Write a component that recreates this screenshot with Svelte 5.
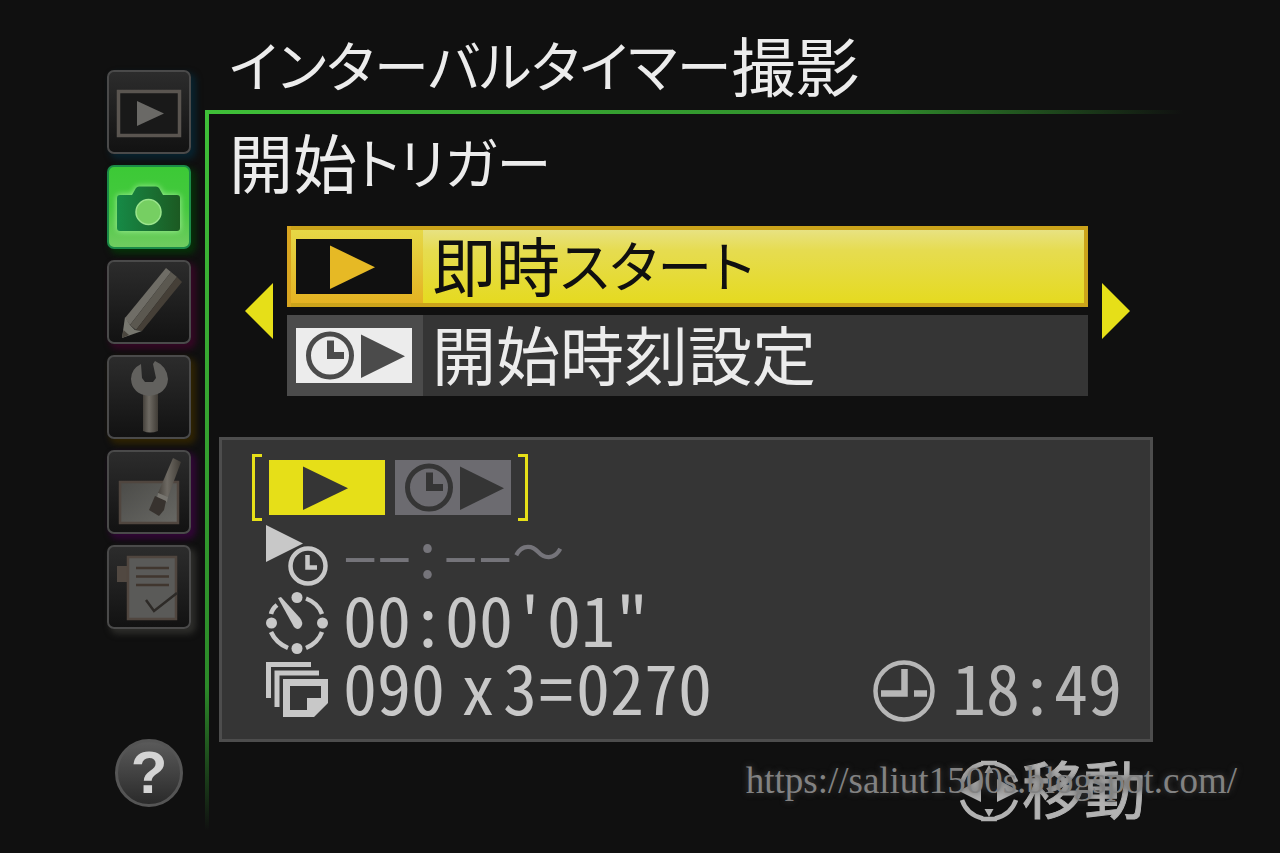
<script>
  const tabs = [
    { id: 'playback', label: '再生メニュー' },
    { id: 'shooting', label: '撮影メニュー' },
    { id: 'custom', label: 'カスタムメニュー' },
    { id: 'setup', label: 'セットアップメニュー' },
    { id: 'retouch', label: '画像編集メニュー' },
    { id: 'mymenu', label: 'マイメニュー' }
  ];

  const options = [
    { id: 'now', label: '即時スタート' },
    { id: 'time', label: '開始時刻設定' }
  ];

  let activeTab = $state('shooting');
  let trigger = $state('now');

  function toggle() {
    trigger = trigger === 'now' ? 'time' : 'now';
  }

  // split a label into kana and kanji runs, kana is set a size smaller
  function runs(text) {
    return text.match(/[\u30a0-\u30ff]+|[^\u30a0-\u30ff]+/g);
  }

  function isKana(run) {
    return /^[\u30a0-\u30ff]/.test(run);
  }
</script>

{#snippet label(text)}
  {#each runs(text) as run}<span class:kana={isKana(run)}>{run}</span>{/each}
{/snippet}

{#snippet triggerIcon(id)}
  <svg class="trigger-icon" viewBox="0 0 116 55" aria-hidden="true">
    <rect class="plate" width="116" height="55" />
    {#if id === 'now'}
      <path class="ink" d="M34 6.5v43.5l45-21.7z" />
    {:else}
      <circle class="ink-line" cx="34" cy="27.5" r="21.5" />
      <path class="ink" d="M31 12.5h7v11.5h10v7H31zM65 6.5v43.5l44-21.7z" />
    {/if}
  </svg>
{/snippet}

{#snippet tabIcon(id)}
  <svg viewBox="0 0 84 84" aria-hidden="true">
    {#if id === 'playback'}
      <rect x="11.5" y="21.5" width="61" height="44" fill="#191919" stroke="#5a5550" stroke-width="3.5" />
      <path d="M30 31v25l27-12.5z" fill="#6a6966" />
    {:else if id === 'shooting'}
      <g class="glow">
        <path d="M13 30h12l4-7q1-1.5 3-1.5h17q2 0 3 1.500l4 7h14q3 0 3 3v30q0 3-3 3H13q-3 0-3-3V33q0-3 3-3z" fill="url(#camera)" />
        <circle cx="41.5" cy="47" r="12.5" fill="#76cf62" stroke="#9be58c" stroke-width="1.5" />
      </g>
    {:else if id === 'custom'}
      <path d="M18 58L59 8l5 4-41 53z" fill="#6f6d66" />
      <path d="M23 65L64 12l6 5-41 53z" fill="#5b5850" />
      <path d="M29 70L70 17l5 5-40 49z" fill="#453f37" />
      <path d="M18 57l-3 21 20-7-7-1-5-5z" fill="#77776f" />
      <path d="M16.5 70L15 78l7-3z" fill="#4a463e" />
    {:else if id === 'setup'}
      <path d="M36 37v39q7 3 15 0V37z" fill="url(#steel)" />
      <path d="M34 9Q24 14 24 24q1 15 18 17 18-2 19-17-1-13-13-18l-2 3 3 14-3 4h-8l-3-4z" fill="#62615e" />
    {:else if id === 'retouch'}
      <rect x="13" y="32" width="58" height="41" fill="url(#paper)" stroke="#50463f" stroke-width="2.5" />
      <path d="M66 8l8 4-13 35-10-4z" fill="url(#steel)" />
      <path d="M51 43l10 4-1 5-10-4z" fill="#77756f" />
      <path d="M48 46l11 5-2 9-5 6-10-6z" fill="#37322e" />
    {:else}
      <rect x="10" y="21" width="11" height="16" fill="#514841" />
      <rect x="21" y="12" width="48" height="62" fill="#5a5a58" stroke="#50463f" stroke-width="2.5" />
      <path d="M29 23h33M29 31.5h33M29 40h33" stroke="#40362e" stroke-width="2.5" />
      <path d="M39 55l8 11 23-18" fill="none" stroke="#2d2a27" stroke-width="2.5" />
    {/if}
  </svg>
{/snippet}

<svg class="defs" width="0" height="0" aria-hidden="true">
  <defs>
    <linearGradient id="camera">
      <stop offset="0" stop-color="#168a46" />
      <stop offset="1" stop-color="#1c5a22" />
    </linearGradient>
    <linearGradient id="steel">
      <stop offset="0" stop-color="#45413b" />
      <stop offset="0.4" stop-color="#6e6a63" />
      <stop offset="1" stop-color="#403c36" />
    </linearGradient>
    <linearGradient id="paper" x2="1" y2="1">
      <stop offset="0" stop-color="#4b4b48" />
      <stop offset="1" stop-color="#686864" />
    </linearGradient>
  </defs>
</svg>

<div class="screen">
  <nav class="sidebar">
    {#each tabs as tab (tab.id)}
      <button
        class="tab {tab.id}"
        class:active={activeTab === tab.id}
        aria-label={tab.label}
        onclick={() => (activeTab = tab.id)}
      >
        {@render tabIcon(tab.id)}
      </button>
    {/each}
    <button class="help" aria-label="ヘルプ">?</button>
  </nav>

  <main>
    <h1>{@render label('インターバルタイマー撮影')}</h1>

    <div class="frame">
      <h2>{@render label('開始トリガー')}</h2>

      <div class="chooser">
        <button class="arrow" aria-label="前へ" onclick={toggle}>
          <svg viewBox="0 0 28 56" aria-hidden="true"><path d="M28 0v56L0 28z" /></svg>
        </button>
        <div class="options">
          {#each options as option (option.id)}
            <button
              class="option"
              class:selected={trigger === option.id}
              onclick={() => (trigger = option.id)}
            >
              <span class="option-icon">{@render triggerIcon(option.id)}</span>
              <span class="option-label">{@render label(option.label)}</span>
            </button>
          {/each}
        </div>
        <button class="arrow" aria-label="次へ" onclick={toggle}>
          <svg viewBox="0 0 28 56" aria-hidden="true"><path d="M0 0v56l28-28z" /></svg>
        </button>
      </div>

      <section class="summary">
        <div class="modes">
          <span class="bracket open"></span>
          {#each options as option (option.id)}
            <span class="mode" class:on={trigger === option.id}>{@render triggerIcon(option.id)}</span>
          {/each}
          <span class="bracket close"></span>
        </div>

        <div class="row">
          <svg class="row-icon" viewBox="0 0 62 62" aria-hidden="true">
            <path d="M0 1v37l37-18.5z" fill="currentColor" />
            <circle cx="42" cy="42" r="21" fill="#353535" />
            <circle cx="42" cy="42" r="17.5" fill="none" stroke="currentColor" stroke-width="4.5" />
            <path d="M41.5 31v12.500H51" fill="none" stroke="currentColor" stroke-width="4.5" />
          </svg>
          <span class="value dim">––:––<span class="wave">〜</span></span>
        </div>

        <div class="row">
          <svg class="row-icon" viewBox="0 0 62 62" aria-hidden="true">
            <g fill="currentColor">
              <circle cx="31" cy="5.5" r="5.5" />
              <circle cx="5.5" cy="31" r="5.5" />
              <circle cx="56.5" cy="31" r="5.5" />
              <circle cx="31" cy="56.5" r="5.5" />
              <path d="M12 6l3-1 19 21q4 5 1 9t-7 0z" />
            </g>
            <path
              d="M40 6.5Q52 11 56 22M56 40Q52 51 40 56M22 56Q10 51 5 40M5 22q1-5 6-9"
              fill="none"
              stroke="currentColor"
              stroke-width="4.5"
            />
          </svg>
          <span class="value">00:00'01"</span>
        </div>

        <div class="row">
          <svg class="row-icon" viewBox="0 0 62 62" aria-hidden="true">
            <g fill="none" stroke="currentColor" stroke-width="5">
              <path d="M2.5 38V4.5H45" />
              <path d="M11 47V13h42" />
            </g>
            <path
              d="M17 19h45v24L48 57H17zM24 26v24h17V38h14V26z"
              fill="currentColor"
              fill-rule="evenodd"
            />
          </svg>
          <span class="value counts">
            <span>090</span><span class="times">x</span><span>3</span><span class="equals">=</span><span>0270</span>
          </span>
          <div class="clock">
            <svg class="row-icon" viewBox="0 0 62 62" aria-hidden="true">
              <circle cx="31" cy="31" r="28.5" fill="none" stroke="currentColor" stroke-width="4.5" />
              <path d="M31.5 9v24.500H8M41 33.5h13" fill="none" stroke="currentColor" stroke-width="6.5" />
            </svg>
            <time class="value">18:49</time>
          </div>
        </div>
      </section>

      <footer>
        <svg class="pad" viewBox="0 0 60 62" aria-hidden="true">
          <path
            d="M3 22Q8 7 24 3.5M36 3.5Q52 7 57 22M57 40Q52 55 36 58.5M24 58.5Q8 55 3 40M22 3h16M22 59h16"
            fill="none"
            stroke="currentColor"
            stroke-width="4.5"
          />
          <path d="M22 19v23L0 31zM38 19v23l22-11zM30 5l4.500 8h-9zM30 57l4.500-8h-9z" fill="currentColor" />
        </svg>
        <span class="hint">移動</span>
        <a class="credit" href="https://saliut1500s.blogspot.com/">https://saliut1500s.blogspot.com/</a>
      </footer>
    </div>
  </main>
</div>

<style>
  :global(body) {
    background: #101010;
  }

  .defs {
    position: absolute;
  }

  .screen {
    box-sizing: border-box;
    display: flex;
    gap: 14px;
    min-height: 100vh;
    padding-left: 107px;
    color: #ececec;
    font-family: 'Noto Sans CJK JP', sans-serif;
  }

  button {
    padding: 0;
    border: 0;
    background: none;
    color: inherit;
    font-family: inherit;
    cursor: pointer;
  }

  svg {
    display: block;
  }

  .sidebar {
    box-sizing: border-box;
    display: flex;
    flex-direction: column;
    flex: 0 0 84px;
    gap: 11px;
    padding: 70px 0 46px;
  }

  .tab {
    box-sizing: border-box;
    height: 84px;
    border: 2px solid #4a4a4a;
    border-radius: 7px;
    background: linear-gradient(#2c2c2c, #121212);
    box-shadow: 4px 4px 6px 1px var(--glow);
  }

  .tab svg {
    width: 84px;
    height: 84px;
    margin: -2px;
  }

  .playback {
    --glow: #08222e;
  }

  .shooting {
    --glow: #063009;
  }

  .custom {
    --glow: #340724;
  }

  .setup {
    --glow: #2f2302;
  }

  .retouch {
    --glow: #310636;
  }

  .mymenu {
    --glow: #2d2d2a;
  }

  .tab.active {
    border-color: #1b8a48;
    background: linear-gradient(#3cc936, #45c93f 50%, #70cc60);
  }

  .glow {
    filter: drop-shadow(0 0 3px #a5f09a);
  }

  .help {
    box-sizing: border-box;
    align-self: center;
    width: 68px;
    height: 68px;
    margin-top: auto;
    border: 3px solid #555;
    border-radius: 50%;
    background: linear-gradient(#5a5a5a, #2a2a2a);
    color: #d4d4d4;
    font: bold 60px/60px 'Liberation Sans', sans-serif;
  }

  main {
    display: flex;
    flex: 1;
    flex-direction: column;
    min-width: 0;
  }

  h1,
  h2,
  .option-label {
    display: flex;
    align-items: center;
    margin: 0;
    font-size: 64px;
    font-weight: 400;
    line-height: 72px;
    font-feature-settings: 'palt';
    white-space: nowrap;
  }

  h1 {
    padding: 27px 0 11px 24px;
  }

  h2 {
    padding: 0 0 8px 24px;
  }

  .kana {
    font-size: 55px;
  }

  .frame {
    flex: 1;
    padding-top: 14px;
    background:
      linear-gradient(90deg, #3fbf38, #2f8a2b 70%, transparent) 0 0 / 91% 4px no-repeat,
      linear-gradient(#3fbf38, #2c8a29 80%, transparent) 0 0 / 4px 97% no-repeat;
  }

  .chooser {
    display: flex;
    align-items: center;
    gap: 14px;
    padding: 22px 150px 0 40px;
  }

  .arrow {
    flex: 0 0 28px;
  }

  .arrow svg {
    width: 28px;
    height: 56px;
    fill: #e6df18;
  }

  .options {
    display: flex;
    flex: 1;
    flex-direction: column;
    gap: 8px;
  }

  .option {
    box-sizing: border-box;
    display: flex;
    height: 81px;
    background: #353535;
    text-align: left;
  }

  .option-icon {
    display: flex;
    flex: 0 0 136px;
    align-items: center;
    justify-content: center;
    box-sizing: border-box;
    height: 81px;
    padding-right: 2px;
    background: #4b4b4b;
  }

  .option-label {
    padding: 0 0 8px 9px;
  }

  .trigger-icon {
    width: 116px;
    height: 55px;
    --plate: #ececec;
    --ink: #4b4b4b;
  }

  .plate {
    fill: var(--plate);
  }

  .ink {
    fill: var(--ink);
  }

  .ink-line {
    fill: none;
    stroke: var(--ink);
    stroke-width: 5;
  }

  .option.selected {
    background: linear-gradient(#e8e38c, #e6dc50 30%, #e5da1c);
    box-shadow: inset 0 0 0 4px #cba31a;
    color: #101010;
  }

  .selected .option-icon {
    background: linear-gradient(#e6da48, #e4b020);
    box-shadow: inset 4px 0 #d9a520, inset 0 4px #cba31a, inset 0 -4px #cba31a;
  }

  .selected .trigger-icon {
    --plate: #101010;
    --ink: #e6b925;
  }

  .summary {
    box-sizing: border-box;
    margin: 41px 127px 0 14px;
    padding: 14px 28px 14px 30px;
    border: 3px solid #4d4d4d;
    background: #353535;
    color: #c8c8c8;
  }

  .modes {
    display: flex;
    align-items: center;
    gap: 10px;
  }

  .mode .trigger-icon {
    --plate: #6c6b70;
    --ink: #353535;
  }

  .mode.on .trigger-icon {
    --plate: #e6df18;
  }

  .bracket {
    box-sizing: border-box;
    width: 10px;
    height: 67px;
    border: 3px solid #e6df18;
  }

  .bracket.open {
    margin-right: -3px;
    border-right: 0;
  }

  .bracket.close {
    margin-left: -3px;
    border-left: 0;
  }

  .row {
    display: flex;
    align-items: center;
    gap: 15px;
    height: 68px;
    padding-left: 14px;
  }

  .row-icon {
    flex: none;
    width: 62px;
    height: 62px;
  }

  .value {
    padding-bottom: 10px;
    font-size: 68px;
    line-height: 58px;
    font-feature-settings: 'hwid';
    white-space: nowrap;
  }

  .dim {
    display: flex;
    align-items: center;
    color: #75747a;
    font-size: 64px;
  }

  .wave {
    font-size: 52px;
    font-feature-settings: normal;
  }

  .counts {
    display: flex;
  }

  .times {
    padding: 0 8px 0 16px;
  }

  .equals {
    padding: 0 3px 0 2px;
  }

  .clock {
    display: flex;
    align-items: center;
    gap: 17px;
    margin-left: auto;
    color: #b6b6b6;
  }

  footer {
    position: relative;
    display: flex;
    align-items: center;
    justify-content: flex-end;
    gap: 3px;
    padding: 4px 134px 0 0;
    color: #b2b2b2;
    font-size: 62px;
  }

  .hint {
    padding-bottom: 8px;
    line-height: 82px;
    -webkit-text-stroke: 1px;
  }

  .pad {
    width: 60px;
    height: 62px;
  }

  .credit {
    position: absolute;
    top: 19px;
    right: 43px;
    color: #828282;
    font: 37px/40px 'Liberation Serif', serif;
    text-decoration: none;
    text-shadow: 0 0 6px #444;
  }
</style>
